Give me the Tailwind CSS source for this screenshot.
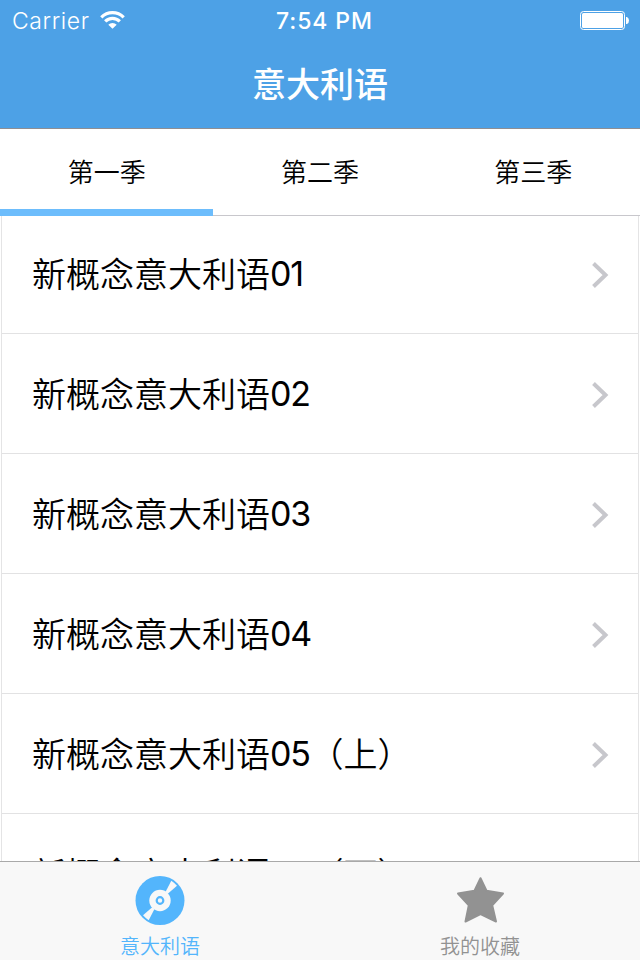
<!DOCTYPE html>
<html lang="zh-CN">

<head>
    <meta charset="UTF-8">
    <meta name="viewport" content="width=device-width, initial-scale=1.0">
    <script src="https://cdn.jsdelivr.net/npm/@tailwindcss/browser@4"></script>
    <title>意大利语</title>
</head>

<body class="font-['Inter','Noto_Sans_CJK_SC',sans-serif] bg-white">
    <div class="flex flex-col w-[640px] h-[960px] overflow-hidden text-black">
        <!-- Header -->
        <header class="shrink-0 h-[129px] bg-[#4da1e6] border-b border-[#8e8e93] text-white">
            <!-- Status bar -->
            <div class="grid grid-cols-3 items-center h-10 pl-3 pr-[11px] pt-0.5">
                <div class="flex items-center gap-2.5">
                    <span class="text-[23px] leading-[38px] font-light tracking-[0.6px]">Carrier</span>
                    <svg class="w-[25px] h-[18px] -mt-0.5" viewBox="0 0 25 18" fill="none" stroke="white" stroke-width="3.2">
                        <path d="M1.3 6.3a15.8 15.8 0 0 1 22.4 0" />
                        <path d="M5.2 10.4a10.3 10.3 0 0 1 14.6 0" />
                        <path d="M12.5 17.8l-4.2-4.1a5.9 5.9 0 0 1 8.4 0z" fill="white" stroke="none" />
                    </svg>
                </div>
                <span class="text-center text-[23px] leading-[38px] font-medium tracking-[0.9px] pl-2">7:54 PM</span>
                <svg class="justify-self-end w-[49px] h-[19px] -mt-0.5" viewBox="0 0 49 19" fill="white">
                    <rect x="0.5" y="0.5" width="44" height="18" rx="3" fill="none" stroke="white" />
                    <rect x="2" y="2" width="41" height="15" rx="1.5" />
                    <path d="M46 6h1q2 1 2 3.500t-2 3.500h-1z" />
                </svg>
            </div>
            <h1 class="text-center text-[34px] leading-[90px] font-medium">意大利语</h1>
        </header>

        <!-- Season tabs -->
        <nav class="shrink-0 grid grid-cols-3 h-[87px] border-b border-[#c8c7cc] text-[26px] leading-[88px] font-[350] text-center">
            <a class="h-[87px] border-b-7 border-[#6dbdfc]">第一季</a>
            <a>第二季</a>
            <a>第三季</a>
        </nav>

        <!-- Lessons -->
        <main class="flex-1 min-h-0 overflow-hidden mx-px border-x border-[#e4e4e5] text-[34px]">
            <ul id="lessons" class="-mt-0.5"></ul>
        </main>

        <!-- Bottom bar -->
        <footer class="shrink-0 grid grid-cols-2 h-[99px] bg-[#f8f8f8] border-t border-[#a9a9a9] text-[20px] leading-7 font-[350]">
            <a class="flex flex-col items-center pt-3.5 gap-[7px] text-[#53b5fc]">
                <svg class="w-[50px] h-[50px] shrink-0" viewBox="0 0 50 50">
                    <circle cx="25" cy="24.500" r="24.500" fill="#53b5fc" />
                    <g fill="#f8f8f8">
                        <path d="M30.500 16L36.300 4.700Q39.500 6.800 42 9.700L32.500 18Z" />
                        <path d="M19.500 33L13.700 44.300Q10.500 42.200 8 39.300L17.500 31Z" />
                        <circle cx="25" cy="24.500" r="10.700" />
                    </g>
                    <circle cx="25" cy="24.500" r="3.300" fill="none" stroke="#53b5fc" stroke-width="2.200" />
                </svg>
                <span>意大利语</span>
            </a>
            <a class="flex flex-col items-center pt-3.5 gap-[7px] text-[#929292]">
                <svg class="w-[50px] h-[50px] shrink-0" viewBox="0 0 50 50" fill="#929292" stroke="#929292" stroke-width="2" stroke-linejoin="round">
                    <path d="M25.500 2.200L31.500 14.800L48 17.500L37.200 29.300L41 45.500L25.500 38.200L10.500 45.500L13.800 29.300L3 17.500L19.500 14.800Z" />
                </svg>
                <span>我的收藏</span>
            </a>
        </footer>
    </div>

    <script>
        const lessons = ["01", "02", "03", "04", "05（上）", "05（下）"];
        const list = document.getElementById("lessons");

        lessons.forEach(lesson => {
            const row = document.createElement("li");
            row.className = "flex items-center justify-between h-[120px] pl-[30px] pr-[29px] border-b border-[#e2e2e3]";
            row.innerHTML = `
                <span class="leading-[120px] pt-0.5 whitespace-nowrap font-[350]">新概念意大利语<span class="relative -top-px font-normal tracking-[-1.3px]">${lesson.slice(0, 2)}</span>${lesson.slice(2)}</span>
                <svg class="w-[18px] h-[28px] mt-[3px]" viewBox="0 0 18 28" fill="none" stroke="#c7c7cc" stroke-width="4">
                    <path d="M2.500 2.500L14.500 14L2.500 25.500" />
                </svg>
            `;
            list.appendChild(row);
        });
    </script>
</body>

</html>
